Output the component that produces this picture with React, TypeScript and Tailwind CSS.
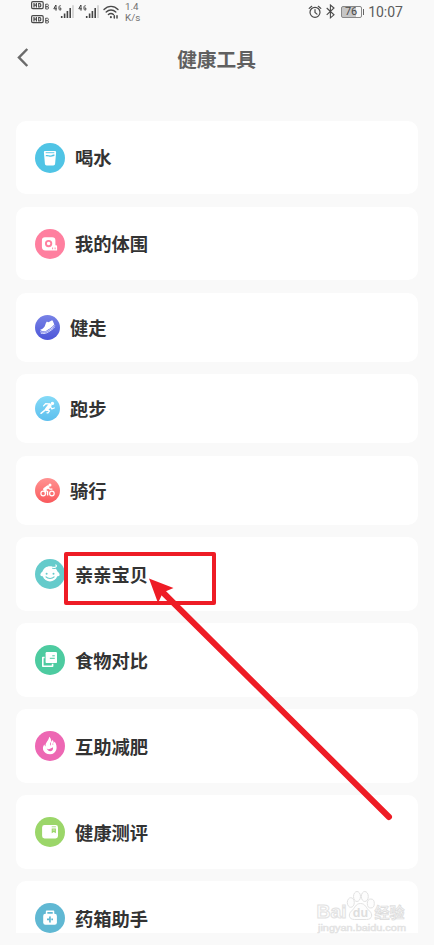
import React from 'react';

interface Tool {
  name: string;
  icon: React.ReactNode;
  bg: string;
  small?: boolean;
}

const HdBadge: React.FC = () => (
  <svg className="w-[19px] h-[9px]" viewBox="0 0 19 9" fill="none" stroke="#4a4a4a">
    <rect x=".6" y=".6" width="11.6" height="7" rx="1.3" strokeWidth="1.2" />
    <path d="M3 2v4.4M5.4 2v4.4M3 4.2h2.4M7.7 2.5v3.5h1c1.5 0 1.5-3.5 0-3.5z" strokeWidth="1.2" />
    <path d="M14.7 3v5h2c1.2 0 1.2-2.3 0-2.3h-2h1.8c1.2 0 1.2-2.5 0-2.5h-1.8" strokeWidth=".9" />
  </svg>
);

const Signal: React.FC = () => (
  <svg className="w-[21px] h-[15px]" viewBox="0 0 21 15" fill="none">
    <path d="M2.8 1 .8 4.8h3M3 1v5.7M7.8 1.9c-2.5-1.8-2.5 5.8 0 4V4H6.5" stroke="#444" strokeWidth="1" />
    <path d="M8.7 12v2M11.6 9.5v4.5M14.4 7v7M17.2 4v10" stroke="#444" strokeWidth="1.6" />
    <path d="M20 1.2V14" stroke="#c4c4c4" strokeWidth="1.3" />
  </svg>
);

const WifiIcon: React.FC = () => (
  <svg className="w-[16px] h-[15px]" viewBox="0 0 16 15" fill="none" stroke="#484848" strokeWidth="1.4" strokeLinecap="round">
    <path d="M1 4.500c4-4.200 10-4.200 14 0M3.200 7.100c2.800-2.800 6.800-2.800 9.600 0M5.400 9.600c1.500-1.400 3.600-1.400 5.100 0" />
    <path d="M7.9 12v.2" strokeWidth="2" />
    <path d="M11.3 10.7v2.3M14 10.7v2.3" strokeWidth="1.5" />
  </svg>
);

const StatusBar: React.FC = () => (
  <div className="flex h-6 shrink-0 items-start justify-between px-[31px] font-['Roboto',sans-serif] text-[#555]">
    <div className="flex items-start">
      <div className="mt-px flex flex-col gap-[5px]">
        <HdBadge />
        <HdBadge />
      </div>
      <div className="ml-[3px] mt-1 flex gap-1">
        <Signal />
        <Signal />
      </div>
      <div className="ml-1 mt-[5px]">
        <WifiIcon />
      </div>
      <div className="ml-[6px] mt-px text-[9.8px] leading-[11px] text-[#707070]">
        <div>1.4</div>
        <div>K/s</div>
      </div>
    </div>
    <div className="flex items-start">
      <svg className="mt-[4.5px] h-[14px] w-[14px]" viewBox="0 0 14 14" fill="none" stroke="#4a4a4a" strokeWidth="1.2" strokeLinecap="round">
        <circle cx="7" cy="7.3" r="5" />
        <path d="M7 4.500v3l2 1.600M1.200 3.400 3.700 1.300M12.800 3.400l-2.500-2.100" />
      </svg>
      <svg className="ml-1 mt-1 h-[15px] w-[9px]" viewBox="0 0 9 15" fill="none" stroke="#4a4a4a" strokeWidth="1.1">
        <path d="m.7 4 7.300 6.800-3.600 3V1l3.600 3-7.300 6.800" />
      </svg>
      <div className="ml-[6px] mt-[6px] flex items-center">
        <div className="flex h-[11.5px] w-[21px] items-center justify-center rounded-[2px] border border-[#888] bg-[linear-gradient(90deg,#c6c6c6_76%,#f9f9f9_76%)] text-[11px] leading-none text-[#4a4a4a]">
          76
        </div>
        <div className="ml-px h-[6px] w-[1.5px] bg-[#666]" />
      </div>
      <div className="ml-1 mt-[2px] text-[14px] leading-5 text-[#5c5c5c]">10:07</div>
    </div>
  </div>
);

const tools: Tool[] = [
  {
    name: '喝水',
    bg: 'bg-[#50c4e5]',
    icon: (
      <>
        <path d="M10.2 8h9.600c1 0 1.400.7 1.300 1.500l-1 11.300c-.2 1.200-.7 1.700-1.800 1.700h-6.600c-1.100 0-1.600-.5-1.800-1.700l-1-11.300c-.1-.8.3-1.500 1.300-1.500z" fill="#fff" />
        <path d="M10.700 12.300c2-.8 3.300.4 5 .1 1.500-.3 2.200-.9 3.800-.9l-.1 1.500c-2 0-3 .9-4.800.8-1.600-.1-2.300-.6-3.800-.4z" fill="#50c4e5" />
        <path d="M10.7 9.7h8.6" stroke="#50c4e5" strokeWidth=".9" />
      </>
    ),
  },
  {
    name: '我的体围',
    bg: 'bg-[#ff7f9f]',
    icon: (
      <>
        <path d="M10 8.300h7.100c2.400 0 3.300 1.100 3.300 3.300v4.600c1.200-.1 1.700.4 1.700 1.400v3.900H10.600c-2.700 0-3.700-1.300-3.700-3.700v-6.300c0-2.200 1-3.200 3.100-3.200z" fill="#fff" />
        <circle cx="13.6" cy="14.6" r="2.7" fill="none" stroke="#ff7f9f" strokeWidth="1.9" />
        <path d="M17.6 18.5v1.8M20.1 18.5v1.8" stroke="#ff7f9f" strokeWidth=".9" />
      </>
    ),
  },
  {
    name: '健走',
    bg: 'bg-linear-to-b from-[#7882e6] to-[#4d55d8]',
    small: true,
    icon: (
      <>
        <path d="M5.200 14.800c3-.9 4.400-2.600 5.100-5 .3-1.300.8-2.400 1.600-3.300.8.8 1.700.9 2.600.3.900-.7 1.700-1.400 3.100-1.300l1.700 4c-2.300 3-5.400 4.700-8.300 6.400-1.700.8-5.200.4-5.800-1.100z" fill="#fff" />
        <path d="M5.200 16.700c2.200.8 4.700.7 6.200 0 3-1.500 6.200-3.500 8.400-6.300M5.800 18.200c2.200.6 4.300.3 5.700-.3 3.100-1.500 6.200-3.500 8.200-6" stroke="#e3e5ff" strokeWidth=".9" fill="none" />
      </>
    ),
  },
  {
    name: '跑步',
    bg: 'bg-linear-to-b from-[#84daf7] to-[#5cbfee]',
    small: true,
    icon: (
      <g stroke="#fff" fill="none" strokeLinecap="round" strokeLinejoin="round">
        <circle cx="17.4" cy="7.4" r="1.7" fill="#fff" stroke="none" />
        <path d="m14.800 9.500-3 3.600" strokeWidth="3.600" />
        <path d="m14.500 8-3.900-.3-2 2.200M15.500 10.800l1.300 2 2.500-.8M11.500 14l3 .8-1.500 2h-1" strokeWidth="1.3" />
        <path d="M10.600 13.600 6 17.300" strokeWidth="1.5" />
      </g>
    ),
  },
  {
    name: '骑行',
    bg: 'bg-linear-to-b from-[#ff9292] to-[#f9585c]',
    small: true,
    icon: (
      <g stroke="#fff" fill="none" strokeLinejoin="round">
        <circle cx="8.2" cy="15.5" r="2.3" strokeWidth="1.2" />
        <circle cx="16.9" cy="15.5" r="2.3" strokeWidth="1.2" />
        <circle cx="15" cy="6.9" r="1.5" fill="#fff" stroke="none" />
        <path d="m13 8.800-3.400 2.500" strokeWidth="3" strokeLinecap="round" />
        <path d="m9.400 11.800 3.200 1.700v4M13 9.800l1.700 1.300h2.700M10.500 13v3" strokeWidth="1.3" />
      </g>
    ),
  },
  {
    name: '亲亲宝贝',
    bg: 'bg-[#65cbcb]',
    icon: (
      <>
        <path d="M15 7.200c3.700 0 6.600 2.200 7.500 5.300 1.300 1 2.300 2.400 2.100 3.400-.2 1-1.300 1.300-2.300 1.400-1.300 3.200-4 5.100-7.300 5.100s-6-1.900-7.300-5.100c-1-.1-2.100-.4-2.300-1.400-.2-1 .8-2.400 2.100-3.400.9-3.100 3.800-5.300 7.500-5.300z" fill="#fff" />
        <circle cx="11.6" cy="14.7" r="1" fill="#65cbcb" />
        <circle cx="18.5" cy="14.7" r="1" fill="#65cbcb" />
        <path d="M11 17.900c1.900 2.100 6.200 2.100 8.100 0" fill="none" stroke="#65cbcb" strokeWidth="1.1" strokeLinecap="round" />
        <path d="M17.200 9.300c2.500.6 4.200.1 4.600-1.200" fill="none" stroke="#65cbcb" strokeWidth="1" />
        <path d="M18.200 8.200c2.800.6 4.300-1.400 2.200-2.400" fill="none" stroke="#fff" strokeWidth="1.1" />
      </>
    ),
  },
  {
    name: '食物对比',
    bg: 'bg-[#4dcba0]',
    icon: (
      <>
        <path d="M9.600 12.500H7.800v8.700h9.800v-2.400" fill="none" stroke="#fff" strokeWidth="1.6" strokeLinejoin="round" />
        <rect x="10.6" y="7.1" width="11.4" height="11" rx="1.2" fill="#fff" />
        <path d="M17.3 10.8h2.5M14.8 13.3h5" stroke="#4dcba0" strokeWidth="1" />
      </>
    ),
  },
  {
    name: '互助减肥',
    bg: 'bg-[#ed67b3]',
    icon: (
      <>
        <path d="M14.200 5.800c1.500 1.400 2.100 3.100 2.100 5 .9-.5 1.100-1.200 1.100-2 1.100 1 1.200 2 1.200 3.100.7-.2.9-.7 1-1.300 3.900 5.400 2 12.700-4.600 12.700-6.500 0-8.800-6-5.700-9.700.4 1.100.7 1.500 1.400 1.900-.8-4 3.300-5.800 3.500-9.700z" fill="#fff" />
        <path d="M11.700 17.300c1.700 1.900 3.700.2 6.300-1.100.8 4.500-4.800 5.600-6.300 1.100z" fill="#ed67b3" />
        <path d="M15.500 11.500v2.800M17.800 12.500v1.200" stroke="#ed67b3" strokeWidth=".8" />
      </>
    ),
  },
  {
    name: '健康测评',
    bg: 'bg-[#9bd669]',
    icon: (
      <>
        <rect x="7.1" y="8" width="15.9" height="13.5" rx="2.4" fill="#fff" />
        <path d="M16.700 9.800h4.200" stroke="#9bd669" strokeWidth=".8" />
        <path d="M16.700 11.500h4.200v4.700l-2.100-1.200-2.100 1.200z" fill="#9bd669" />
        <path d="M17.700 13h2.200" stroke="#fff" strokeWidth=".6" />
      </>
    ),
  },
  {
    name: '药箱助手',
    bg: 'bg-[#60b8d3]',
    icon: (
      <>
        <path d="M11.600 11V8.300h6.900V11" fill="none" stroke="#fff" strokeWidth="1.5" strokeLinejoin="round" />
        <rect x="8.2" y="10.8" width="13.7" height="11" rx="2.2" fill="#fff" />
        <path d="M15 13.400v6M12 16.400h6" stroke="#60b8d3" strokeWidth="1.8" />
        <path d="M16.200 14v4.800" stroke="#fff" strokeWidth=".5" />
      </>
    ),
  },
];

const ToolCard: React.FC<{ tool: Tool }> = ({ tool }) => (
  <div className={`flex shrink-0 items-center gap-[10px] rounded-[10px] bg-white pl-[19px] ${tool.small ? 'h-[69.2px]' : 'h-[73.7px]'}`}>
    <div className={`shrink-0 rounded-full ${tool.bg} ${tool.small ? 'size-[25px]' : 'size-[30px]'}`}>
      <svg className="h-full w-full" viewBox={tool.small ? '0 0 25 25' : '0 0 30 30'}>
        {tool.icon}
      </svg>
    </div>
    <span className="pb-px text-[18.3px] font-bold leading-6 text-[#333]">{tool.name}</span>
  </div>
);

const Watermark: React.FC = () => (
  <svg className="absolute left-[314px] top-[888px] h-[48px] w-[96px]" viewBox="0 0 96 48" fill="#fdfdfd" stroke="#e2e2e2" strokeWidth="1">
    <g fontFamily="Liberation Sans, sans-serif" fontWeight="bold">
      <text x="2.5" y="29.5" fontSize="19" textLength="30" lengthAdjust="spacingAndGlyphs">Bai</text>
      <ellipse cx="36.8" cy="14.5" rx="3.5" ry="4.8" />
      <ellipse cx="43" cy="8.5" rx="3.5" ry="5" />
      <ellipse cx="50.8" cy="8.5" rx="3.5" ry="5" />
      <ellipse cx="56.8" cy="15.5" rx="3.5" ry="4.5" />
      <path d="M46.500 15.500c5 0 5.500 4.500 9 7.500s3 8.500-3 8.500H40.500c-6 0-6.500-5.500-3-8.500s4-7.500 9-7.500z" />
      <text x="38.8" y="28.5" fontSize="12.5" fill="#dedede" stroke="none">du</text>
    </g>
    <text x="4" y="43" fontSize="9.5" fontFamily="Liberation Sans, sans-serif" textLength="88" lengthAdjust="spacingAndGlyphs" fill="#e6e6e6" strokeWidth=".5">
      jingyan.baidu.com
    </text>
    <text x="60.5" y="29.5" fontSize="15" fontFamily="Noto Sans CJK SC, sans-serif" fontWeight="bold" fill="#f3f3f3" stroke="#dcdcdc" strokeWidth=".7">经验</text>
  </svg>
);

export default function App() {
  return (
    <div className="relative flex h-[945px] w-[434px] flex-col overflow-hidden bg-[#f9f9f9] font-['Noto_Sans_CJK_SC',sans-serif]">
      <StatusBar />
      <header className="grid h-[70px] shrink-0 grid-cols-[60px_1fr_60px] items-center">
        <svg className="ml-[17px] h-5 w-3 -translate-y-[1.5px]" viewBox="0 0 12 20" fill="none" stroke="#6b6b6b" strokeWidth="2.5">
          <path d="M10.300 1.500 2 10l8.300 8.500" />
        </svg>
        <h1 className="-ml-px text-center text-[19.7px] font-bold leading-7 text-[#606060]">健康工具</h1>
      </header>
      <main className="mt-[26.8px] flex h-[812.6px] shrink-0 flex-col gap-[12.3px] overflow-hidden px-4">
        {tools.map((tool) => (
          <ToolCard key={tool.name} tool={tool} />
        ))}
      </main>

      {/* highlight box and pointer */}
      <div className="absolute left-[64px] top-[552px] h-[53px] w-[152px] rounded-[2px] border-4 border-[#ee1c25]" />
      <svg className="absolute left-[140px] top-[570px] h-[260px] w-[260px]" viewBox="140 570 260 260">
        <path d="M163 592.500 389 817" stroke="#ee1c25" strokeWidth="6" strokeLinecap="round" />
        <path d="m149 578.500 24.500 9.500-10.500 4.500-5 10.500z" fill="#ee1c25" />
      </svg>
      <Watermark />
    </div>
  );
}
